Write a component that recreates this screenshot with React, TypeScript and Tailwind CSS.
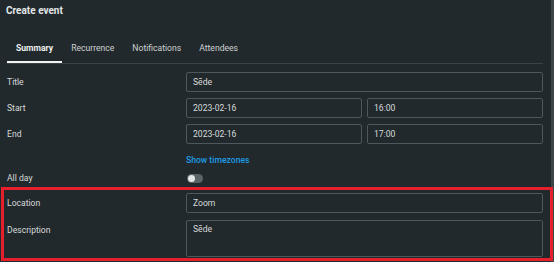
import React from "react";

const Label = ({ children }: { children: React.ReactNode }) => (
  <div className="w-[179px] shrink-0 h-[20px] flex items-center text-[8.6px] text-[#d6dadb]">{children}</div>
);

const Input = ({ value, className = "" }: { value: string; className?: string }) => (
  <div className={`h-[20px] flex-1 rounded-[2px] border border-[#4c585b] bg-[#22292c] px-[6px] flex items-center text-[8.6px] text-[#d6dadb] ${className}`}>
    {value}
  </div>
);

export default function App() {
  const tabs = ["Summary", "Recurrence", "Notifications", "Attendees"];
  return (
    <div className="relative w-[554px] h-[262px] bg-[#22292c] overflow-hidden flex font-['Roboto',sans-serif]">
      <div className="flex-1 flex flex-col pl-[7px] pr-[8px]">
        <div className="h-[21px] -ml-[1px] flex items-center text-[10px] font-bold text-[#e3e6e6]">Create event</div>
        <div className="mt-[14px] flex border-b border-[#3a4447]">
          {tabs.map((t, i) => (
            <div
              key={t}
              className={`h-[28px] px-[9px] pt-[1px] flex items-center text-[8.6px] ${
                i === 0 ? "border-b-2 border-[#f0f2f2] font-bold text-[#eef0f0]" : "border-b-2 border-transparent text-[#cdd2d3]"
              }`}
            >
              {t}
            </div>
          ))}
        </div>
        <div className="mt-[8px] flex">
          <Label>Title</Label>
          <Input value="Sēde" />
        </div>
        <div className="mt-[6px] flex">
          <Label>Start</Label>
          <div className="flex-1 flex gap-[5px]">
            <Input value="2023-02-16" />
            <Input value="16:00" />
          </div>
        </div>
        <div className="mt-[6px] flex">
          <Label>End</Label>
          <div className="flex-1 flex gap-[5px]">
            <Input value="2023-02-16" />
            <Input value="17:00" />
          </div>
        </div>
        <div className="mt-[8px] h-[16px] flex items-center">
          <div className="w-[179px] shrink-0" />
          <span className="text-[8.6px] font-medium text-[#1c9be3]">Show timezones</span>
        </div>
        <div className="mt-[2px] h-[16px] flex items-center">
          <div className="w-[179px] shrink-0 text-[8.6px] text-[#d6dadb]">All day</div>
          <div className="ml-[1px] w-[16px] h-[9px] rounded-full bg-[#5b6568] flex items-center px-[1px]">
            <div className="w-[7px] h-[7px] rounded-full bg-[#e4e6e6]" />
          </div>
        </div>
        <div className="mt-[7px] flex">
          <Label>Location</Label>
          <Input value="Zoom" />
        </div>
        <div className="mt-[7px] flex">
          <Label>Description</Label>
          <div className="h-[37px] flex-1 rounded-[2px] border border-[#4c585b] bg-[#22292c] px-[6px] pt-[2px] text-[8.6px] text-[#d6dadb]">
            Sēde
          </div>
        </div>
      </div>
      <div className="w-[3px] bg-[#3b4447]" />
      <div className="absolute left-[1px] top-[187px] w-[552px] h-[74px] border-[3px] border-[#e5202c] pointer-events-none" />
    </div>
  );
}
